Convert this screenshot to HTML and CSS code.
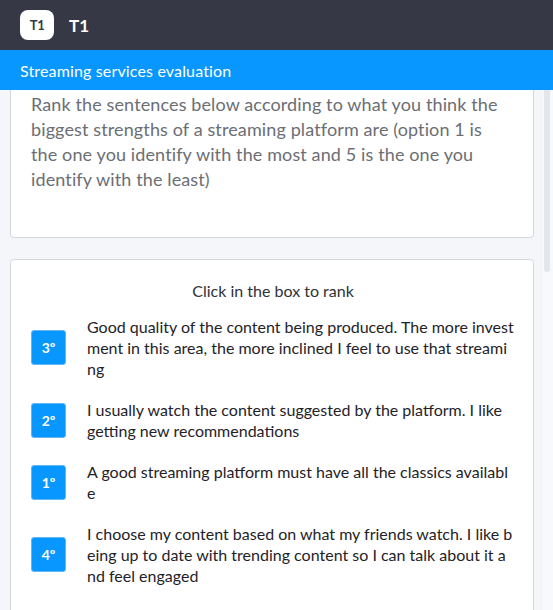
FILE: index.html
```html
<!DOCTYPE html>
<html lang="en">
<head>
<meta charset="utf-8">
<title>T1 - Streaming services evaluation</title>
<link rel="stylesheet" href="styles.css">
</head>
<body>
<header class="topbar">
  <div class="logo">T1</div>
  <div class="app-title">T1</div>
</header>
<div class="subbar">Streaming services evaluation</div>
<div class="main">
  <main class="scroll">
    <section class="card card-intro">
      <p class="question">Rank the sentences below according to what you think the biggest strengths of a streaming platform are (option 1 is the one you identify with the most and 5 is the one you identify with the least)</p>
    </section>
    <section class="card card-rank">
      <div class="rank-hint">Click in the box to rank</div>
      <ul class="rank-list">
        <li class="rank-item"><span class="badge">3º</span><span class="rank-text">Good quality of the content being produced. The more investment in this area, the more inclined I feel to use that streaming</span></li>
        <li class="rank-item"><span class="badge">2º</span><span class="rank-text">I usually watch the content suggested by the platform. I like getting new recommendations</span></li>
        <li class="rank-item"><span class="badge">1º</span><span class="rank-text">A good streaming platform must have all the classics available</span></li>
        <li class="rank-item"><span class="badge">4º</span><span class="rank-text">I choose my content based on what my friends watch. I like being up to date with trending content so I can talk about it and feel engaged</span></li>
        <li class="rank-item"><span class="badge">5º</span><span class="rank-text">I think original productions are the most important reason to choose a platform over the others</span></li>
      </ul>
    </section>
  </main>
  <div class="rail" aria-hidden="true"><div class="thumb"></div></div>
</div>
</body>
</html>
```
FILE: styles.css
```css
* { box-sizing: border-box; }
html, body { margin: 0; padding: 0; height: 100%; overflow: hidden; }
body {
  font-family: "Lato", "Liberation Sans", sans-serif;
  background: #f5f6fa;
  color: #1f2329;
}
.topbar {
  height: 50px;
  background: #363945;
  display: flex;
  align-items: center;
  padding: 0 20px;
  gap: 15px;
}
.logo {
  width: 34px;
  height: 30px;
  background: #ffffff;
  border-radius: 8px;
  display: flex;
  align-items: center;
  justify-content: center;
  color: #363945;
  font-weight: 700;
  font-size: 13px;
  letter-spacing: -0.3px;
}
.app-title {
  color: #ffffff;
  font-weight: 700;
  font-size: 17px;
}
.subbar {
  height: 40px;
  background: #0797ff;
  color: #ffffff;
  font-size: 16px;
  letter-spacing: 0.15px;
  display: flex;
  align-items: center;
  padding-left: 20px;
}
.main {
  height: 520px;
  display: flex;
}
.scroll {
  flex: 1;
  min-width: 0;
  overflow: hidden;
  padding: 0 9px 0 10px;
}
.rail {
  flex: 0 0 10px;
  background: #f8f9fc;
  padding-left: 1px;
}
.thumb {
  width: 6px;
  height: 182px;
  background: #e3e6ea;
  border-radius: 0 0 4px 4px;
}
.card {
  background: #ffffff;
  border: 1px solid #d5d9de;
  border-radius: 4px;
  margin-bottom: 21px;
}
.card-intro {
  border-top: none;
  border-top-left-radius: 0;
  border-top-right-radius: 0;
  padding: 2px 20px 45px;
}
.question {
  margin: 0;
  font-size: 18px;
  line-height: 25px;
  letter-spacing: 0.12px;
  color: #6b6e74;
}
.card-rank { padding: 20px 19px 22px 20px; }
.rank-hint {
  text-align: center;
  font-size: 16px;
  line-height: 21px;
  color: #2f3237;
  margin-bottom: 15px;
  padding-left: 1px;
}
.rank-list {
  list-style: none;
  margin: 0;
  padding: 0;
  display: flex;
  flex-direction: column;
  gap: 20px;
}
.rank-item {
  display: flex;
  align-items: center;
  gap: 21px;
}
.badge {
  flex: 0 0 35px;
  width: 35px;
  height: 35px;
  border-radius: 3px;
  background: #0797ff;
  border: 1px solid #5fb7f5;
  color: #ffffff;
  font-weight: 700;
  font-size: 14px;
  display: flex;
  align-items: center;
  justify-content: center;
}
.rank-text {
  flex: 1;
  font-size: 16px;
  line-height: 21px;
  color: #1f2329;
  word-break: break-all;
}
```
